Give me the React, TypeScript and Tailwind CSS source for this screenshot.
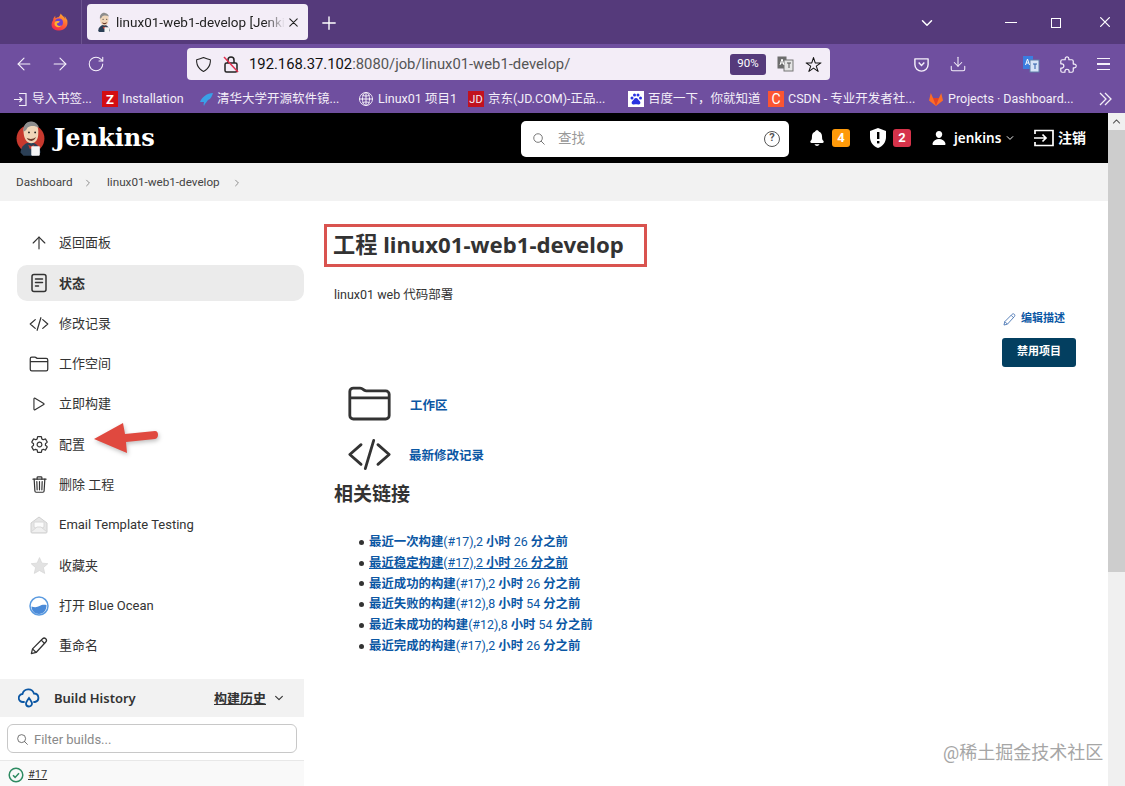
import React from "react";
import {
  IoCodeSlashOutline, IoFolderOutline, IoPlayOutline, IoSettingsOutline, IoTrashOutline,
  IoSearchOutline, IoNotifications, IoPerson, IoChevronDown, IoChevronForward,
  IoCloseOutline, IoAddOutline, IoShieldOutline, IoStarOutline,
  IoExtensionPuzzleOutline, IoGlobeOutline, IoChevronUp,
} from "react-icons/io5";
import { ArrowUp, ArrowLeft, ArrowRight, RotateCw, Download } from "lucide-react";

const Head = ({ s, tab }: { s: number; tab?: boolean }) => (
  <svg width={s} height={s * 1.15} viewBox="0 0 40 46">
    {!tab && <circle cx="20" cy="24" r="18" fill="#c7392e" />}
    <path d="M7 42c1-9 7-13 13-13s12 4 13 13l-5 4H11z" fill="#2b3f55" />
    <path d="M11 14C11 6 16 2 22 3s9 7 8 15c0 6-3 12-9 12-6 0-10-6-10-16z" fill="#f0d6b9" />
    <path d="M11 15C10 7 15 1 22 2c5 1 8 4 9 8-5-3-12-3-15 0-1 2-2 4-5 5z" fill="#8d8d8d" />
    <path d="M15 23c3 2 9 2 12-1-1 3-3 5-6 5s-5-2-6-4z" fill="#6b3a2a" />
    <circle cx="18" cy="16" r="1.2" fill="#222" /><circle cx="26" cy="16" r="1.2" fill="#222" />
    <path d="M17 32l4 2 4-2-2 5h-4z" fill="#c7392e" />
    <rect x="21" y="34" width="11" height="12" rx="1" fill="#f4f4f4" />
  </svg>
);

const Firefox = () => (
  <svg width="17" height="18" viewBox="0 0 32 32">
    <defs>
      <linearGradient id="ff" x1="0.8" y1="0" x2="0.2" y2="1"><stop offset="0" stopColor="#ffb32c" /><stop offset="0.55" stopColor="#ff5a36" /><stop offset="1" stopColor="#f0264f" /></linearGradient>
    </defs>
    <path d="M30 12c-1-3-3-6-5-7 1 2 2 4 2 6-2-5-6-7-9-11 0 3-2 5-4 7-2 0-4 1-5 2-1-1-1-3-1-5-2 2-4 5-4 8-2 3-3 6-3 9 0 7 6 11 15 11s15-7 15-14c0-2 0-5-1-7z" fill="url(#ff)" />
    <circle cx="15" cy="17" r="7.5" fill="#6d3fd0" />
    <path d="M8 15c3-2 8-1 10 1-2 0-4 1-4 2l-3 1c0 4 5 6 9 3-2 4-8 5-11 2-3-2-3-6-1-9z" fill="#ffb32c" />
  </svg>
);

const Bookmark = ({ icon, text, gap }: { icon: React.ReactNode; text: string; gap: string }) => (
  <div className={`flex items-center shrink-0 gap-1 ${gap}`}>
    {icon}
    <span className="text-[12.5px] text-[#f3eef8] whitespace-nowrap leading-none">{text}</span>
  </div>
);

const StatusIcon = () => (
  <svg width="16" height="20" viewBox="0 0 16 20" fill="none" stroke="#333" strokeWidth="1.5" strokeLinecap="round">
    <rect x="1" y="1.5" width="14" height="17" rx="2" />
    <path d="M4.5 6h7M4.5 9.5h7M4.5 13h3" />
  </svg>
);

const Pencil = ({ size, color, w = 1.4 }: { size: number; color: string; w?: number }) => (
  <svg width={size} height={size} viewBox="0 0 20 20" fill="none" stroke={color} strokeWidth={w} strokeLinejoin="round">
    <path d="M1.500 18.500l1.300-5.300L14 2c1-1 2.500-1 3.500 0s1 2.500 0 3.500L6.800 17.200z" />
    <path d="M12.500 3.500l4 4M2.800 13.200l4 4" />
  </svg>
);

const Mail = () => (
  <svg width="18" height="18" viewBox="0 0 18 18">
    <path d="M1 7l8-6 8 6v9a1 1 0 0 1-1 1H2a1 1 0 0 1-1-1z" fill="#e6e6e6" stroke="#d0d0d0" />
    <path d="M4 6h10v5l-5 3-5-3z" fill="#fbfbfb" stroke="#d8d8d8" />
    <path d="M1 16l6-5h4l6 5" fill="#f0f0f0" stroke="#d8d8d8" />
  </svg>
);

const GreyStar = () => (
  <svg width="19" height="19" viewBox="0 0 24 24"><path d="M12 2l3 7 7.5.7-5.6 5 1.7 7.3L12 18.300 5.400 22l1.700-7.300-5.600-5L9 9z" fill="#e2e2e2" stroke="#d8d8d8" /></svg>
);

const BlueOcean = () => (
  <svg width="20" height="20" viewBox="0 0 20 20">
    <circle cx="10" cy="10" r="9" fill="#fff" stroke="#5b9be0" strokeWidth="1.500" />
    <path d="M2.500 10.500c3 1 6 .8 8-.5 2-1.200 4-1.500 7-1 .3 5-3 9-7.500 9s-7.500-3.500-7.500-7.500z" fill="#4a8ad8" />
  </svg>
);

const items: { icon: React.ReactNode; label: string; active?: boolean }[] = [
  { icon: <ArrowUp size={20} strokeWidth={1.4} />, label: "返回面板" },
  { icon: <StatusIcon />, label: "状态", active: true },
  { icon: <IoCodeSlashOutline size={20} />, label: "修改记录" },
  { icon: <IoFolderOutline size={20} />, label: "工作空间" },
  { icon: <IoPlayOutline size={18} />, label: "立即构建" },
  { icon: <IoSettingsOutline size={19} />, label: "配置" },
  { icon: <IoTrashOutline size={19} />, label: "删除 工程" },
  { icon: <Mail />, label: "Email Template Testing" },
  { icon: <GreyStar />, label: "收藏夹" },
  { icon: <BlueOcean />, label: "打开 Blue Ocean" },
  { icon: <Pencil size={18} color="#333" />, label: "重命名" },
];

const links = [
  ["最近一次构建", "(#17),2 ", "小时", " 26 ", "分之前"],
  ["最近稳定构建", "(#17),2 ", "小时", " 26 ", "分之前"],
  ["最近成功的构建", "(#17),2 ", "小时", " 26 ", "分之前"],
  ["最近失败的构建", "(#12),8 ", "小时", " 54 ", "分之前"],
  ["最近未成功的构建", "(#12),8 ", "小时", " 54 ", "分之前"],
  ["最近完成的构建", "(#17),2 ", "小时", " 26 ", "分之前"],
];

export default function App() {
  return (
    <div className="relative w-[1125px] h-[786px] overflow-hidden bg-white flex flex-col text-[#333] font-['Roboto','Noto_Sans_CJK_SC',sans-serif]">
      {/* tab strip */}
      <div className="h-[44px] shrink-0 bg-[#553a7b] flex items-start text-white">
        <div className="w-[82px] h-[44px] border-r border-[#6d5490] flex items-center justify-end pr-[13px]"><Firefox /></div>
        <div className="ml-[5px] mt-[4px] w-[221px] h-[36px] bg-[#f3edf7] rounded-[4px] flex items-center pl-[8px] text-[#222]">
          <Head s={18} tab />
          <span className="ml-[3px] w-[169px] overflow-hidden whitespace-nowrap text-[13.500px] [mask-image:linear-gradient(to_right,black_88%,transparent)]">linux01-web1-develop [Jenkins]</span>
          <IoCloseOutline size={17} />
        </div>
        <IoAddOutline size={22} className="ml-[10px] mt-[12px]" />
        <div className="flex-1" />
        <IoChevronDown size={16} className="mt-[15px] mr-[70px]" />
        <div className="w-[12px] h-px bg-white mt-[22px] mr-[34px]" />
        <div className="w-[10px] h-[10px] border border-white mt-[18px] mr-[34px]" />
        <IoCloseOutline size={20} className="mt-[12px] mr-[10px]" />
      </div>
      {/* toolbar */}
      <div className="h-[36px] shrink-0 bg-[#6f4f9f] flex items-center pt-[4px] text-[#f6f1fb]">
        <ArrowLeft size={20} strokeWidth={1.300} className="ml-[14px]" />
        <ArrowRight size={20} strokeWidth={1.300} className="ml-[16px]" />
        <RotateCw size={18} strokeWidth={1.400} className="ml-[17px]" />
        <div className="ml-[82px] w-[643px] h-[32px] bg-[#f3edf7] rounded-[4px] flex items-center text-[#222] shrink-0">
          <IoShieldOutline size={17} className="ml-[8px]" />
          <svg width="16" height="18" viewBox="0 0 16 18" className="ml-[11px]" fill="none">
            <rect x="2" y="8" width="12" height="9" rx="1.500" stroke="#222" strokeWidth="1.500" />
            <path d="M5 8V5a3 3 0 0 1 6 0v3" stroke="#222" strokeWidth="1.500" />
            <path d="M1 2l14 15" stroke="#e2304f" strokeWidth="1.500" />
          </svg>
          <span className="ml-[10px] text-[14.800px] whitespace-nowrap text-[#555]"><span className="text-[#111]">192.168.37.102</span>:8080/job/linux01-web1-develop/</span>
          <div className="flex-1" />
          <div className="w-[36px] h-[21px] rounded-[3px] bg-[#553a7b] text-white text-[11.500px] flex items-center justify-center">90%</div>
          <svg width="17" height="16" viewBox="0 0 17 16" className="ml-[11px]">
            <rect x="0.500" y="0.500" width="9" height="12" fill="#6d6d6d" /><rect x="7" y="4" width="9" height="11" fill="#e4e4e4" stroke="#777" />
            <path d="M3 9l2-6 2 6M3.800 7h2.400" stroke="#fff" fill="none" /><path d="M10 7h4M12 7v5" stroke="#555" />
          </svg>
          <IoStarOutline size={17} className="ml-[11px] text-[#111]" />
          <div className="w-[8px]" />
        </div>
        <svg width="17" height="17" viewBox="0 0 18 18" fill="none" stroke="#f6f1fb" strokeWidth="1.500" className="ml-[83px]"><path d="M2 3h14v6a7 7 0 0 1-14 0z" strokeLinejoin="round" /><path d="M6 7l3 3 3-3" /></svg>
        <Download size={18} strokeWidth={1.400} className="ml-[19px]" />
        <svg width="18" height="18" viewBox="0 0 18 18" className="ml-[55px]">
          <rect x="1" y="1" width="10" height="13" fill="#3b7de0" /><rect x="8" y="5" width="9" height="12" fill="#d6e4f7" stroke="#5e7ea8" />
          <path d="M3.500 10l2-6 2 6M4.300 8h2.400" stroke="#fff" fill="none" /><path d="M11 9h4M13 9v5" stroke="#2b5ca8" />
        </svg>
        <IoExtensionPuzzleOutline size={19} className="ml-[19px]" />
        <div className="ml-[19px] flex flex-col gap-[4px]"><div className="w-[13px] h-[1.500px] bg-[#f6f1fb]" /><div className="w-[13px] h-[1.500px] bg-[#f6f1fb]" /><div className="w-[13px] h-[1.500px] bg-[#f6f1fb]" /></div>
      </div>
      {/* bookmarks */}
      <div className="h-[33px] shrink-0 bg-[#6f4f9f] flex items-center pl-[13px] pt-[5px]">
        <Bookmark gap="w-[89px]" text="导入书签..." icon={<svg width="15" height="15" viewBox="0 0 15 15" fill="none" stroke="#f3eef8" strokeWidth="1.200"><path d="M6 1.500h7v12H6M1 7.500h8M6.500 5l2.500 2.500L6.500 10" /></svg>} />
        <Bookmark gap="w-[97px]" text="Installation" icon={<span className="w-[16px] h-[16px] bg-[#d40d12] text-white font-bold text-[13px] flex items-center justify-center leading-none">Z</span>} />
        <Bookmark gap="w-[159px]" text="清华大学开源软件镜..." icon={<svg width="14" height="14" viewBox="0 0 14 14"><path d="M1 10C3 5 8 1 14 1c-1 3-2 6-5 7-1 2-3 3-4 6-1-2 0-3 0-4-1 0-3 0-4 0z" fill="#3aa0e8" /></svg>} />
        <Bookmark gap="w-[110px]" text="Linux01 项目1" icon={<IoGlobeOutline size={16} className="text-[#f3eef8]" />} />
        <Bookmark gap="w-[160px]" text="京东(JD.COM)-正品..." icon={<span className="w-[16px] h-[16px] bg-[#c1121f] text-[#f3eef8] text-[11px] flex items-center justify-center leading-none">JD</span>} />
        <Bookmark gap="w-[140px]" text="百度一下，你就知道" icon={<span className="w-[16px] h-[16px] bg-white flex items-center justify-center"><svg width="14" height="14" viewBox="0 0 14 14" fill="#2932e1"><circle cx="3" cy="6" r="1.500" /><circle cx="5.500" cy="3" r="1.500" /><circle cx="9" cy="3" r="1.500" /><circle cx="11.500" cy="6" r="1.500" /><path d="M7 6c2 0 2 2 4 3.500 1 1.500 0 3.500-2 3-1-.3-3-.3-4 0-2 .5-3-1.500-2-3C5 8 5 6 7 6z" /></svg></span>} />
        <Bookmark gap="w-[160px]" text="CSDN - 专业开发者社..." icon={<span className="w-[16px] h-[16px] bg-[#fc5531] text-white text-[14px] flex items-center justify-center leading-none">C</span>} />
        <Bookmark gap="" text="Projects · Dashboard..." icon={<svg width="16" height="16" viewBox="0 0 16 16"><path d="M8 15L1 9.500 2.800 2 5 7h6l2.200-5L15 9.500z" fill="#fc6d26" /><path d="M8 15L5 7h6z" fill="#e24329" /></svg>} />
        <div className="flex-1" />
        <svg width="14" height="14" viewBox="0 0 14 14" fill="none" stroke="#f3eef8" strokeWidth="1.300" className="mr-[13px]"><path d="M2 1l6 6-6 6M7 1l6 6-6 6" /></svg>
      </div>
      {/* page + scrollbar */}
      <div className="flex-1 flex min-h-0">
        <div className="w-[1108px] flex flex-col min-h-0">
          {/* header */}
          <div className="h-[50px] shrink-0 bg-black flex items-center text-white">
            <div className="ml-[15px] w-[39px] flex"><Head s={31} /></div>
            <span className="w-[467px] font-['DejaVu_Serif',serif] font-bold text-[24px] leading-none">Jenkins</span>
            <div className="w-[268px] h-[36px] bg-white rounded-[5px] flex items-center text-[#999] mt-[1px] shrink-0">
              <IoSearchOutline size={14} className="ml-[11px] text-[#666]" />
              <span className="ml-[12px] text-[13.500px]">查找</span>
              <div className="flex-1" />
              <span className="w-[16px] h-[16px] rounded-full border-[1.500px] border-[#555] text-[#555] text-[11px] font-bold flex items-center justify-center mr-[9px]">?</span>
            </div>
            <IoNotifications size={18} className="ml-[19px]" />
            <span className="ml-[6px] w-[18px] h-[18px] rounded-[3px] bg-[#fe9a0a] text-[13px] font-bold flex items-center justify-center">4</span>
            <svg width="18" height="20" viewBox="0 0 18 20" className="ml-[19px]"><path d="M9 0l8 3v6c0 5-3 9-8 11-5-2-8-6-8-11V3z" fill="#fff" /><rect x="8" y="4" width="2.400" height="7" fill="#000" /><rect x="8" y="13" width="2.400" height="2.400" fill="#000" /></svg>
            <span className="ml-[6px] w-[18px] h-[18px] rounded-[3px] bg-[#d6334a] text-[13px] font-bold flex items-center justify-center">2</span>
            <IoPerson size={16} className="ml-[20px]" />
            <span className="ml-[7px] w-[47px] text-[13.500px] font-semibold font-['Noto_Sans',sans-serif]">jenkins</span>
            <IoChevronDown size={10} className="ml-[4px]" />
            <svg width="20" height="18" viewBox="0 0 20 18" fill="none" stroke="#fff" strokeWidth="1.700" className="ml-[19px]"><path d="M1 5V1.500h18v15H1V13M0 9h12M8.500 5.500L12 9l-3.500 3.500" /></svg>
            <span className="ml-[4px] text-[14px] font-semibold">注销</span>
          </div>
          {/* breadcrumb */}
          <div className="h-[38px] shrink-0 bg-[#f2f2f2] flex items-center pt-[2px] text-[11.700px] text-[#444]">
            <span className="ml-[16px] w-[56px]">Dashboard</span>
            <IoChevronForward size={10} className="ml-[11px] text-[#888]" />
            <span className="ml-[14px] w-[114px] whitespace-nowrap">linux01-web1-develop</span>
            <IoChevronForward size={10} className="ml-[11px] text-[#888]" />
          </div>
          <div className="flex-1 flex min-h-0">
            {/* sidebar */}
            <div className="w-[304px] shrink-0 pt-[24px] flex flex-col">
              <div className="pl-[17px] flex flex-col gap-[4.300px]">
                {items.map((it) => (
                  <div key={it.label} className={`h-[36px] rounded-[10px] flex items-center pl-[12px] ${it.active ? "bg-[#ebebeb] font-bold" : ""}`}>
                    <span className="w-[20px] flex justify-center text-[#333]">{it.icon}</span>
                    <span className="ml-[10px] text-[13px] text-[#333]">{it.label}</span>
                  </div>
                ))}
              </div>
              <div className="mt-[15px] h-[38px] shrink-0 bg-[#f2f2f2] flex items-center">
                <svg width="22" height="22" viewBox="0 0 22 22" fill="none" stroke="#0b57a4" strokeWidth="1.800" strokeLinecap="round" className="ml-[18px]">
                  <path d="M6 15H5a4 4 0 0 1-.500-8A6 6 0 0 1 16 6.500 4.300 4.300 0 0 1 17 15h-1" /><path d="M11 11c-2 3-3 4-3 5.500a3 3 0 0 0 6 0C14 15 13 14 11 11z" />
                </svg>
                <span className="ml-[14px] pt-[2px] text-[13px] font-semibold font-['Noto_Sans',sans-serif]">Build History</span>
                <span className="ml-auto pt-[2px] text-[13px] font-semibold underline">构建历史</span>
                <IoChevronDown size={12} className="ml-[7px] mr-[19px]" />
              </div>
              <div className="mt-[7px] ml-[7px] w-[290px] h-[29px] shrink-0 border border-[#c8c8c8] rounded-[6px] flex items-center pt-[2px] text-[#8a8a8a] text-[13px]">
                <IoSearchOutline size={13} className="ml-[8px] text-[#555]" />
                <span className="ml-[5px]">Filter builds...</span>
              </div>
              <div className="mt-[7px] flex-1 border-t border-[#e8e8e8] bg-[#f9f9f9] flex items-center pt-[3px]">
                <svg width="16" height="16" viewBox="0 0 16 16" fill="none" stroke="#2e8b62" strokeWidth="1.500" className="ml-[8px]"><circle cx="8" cy="8" r="6.800" /><path d="M5 8.300l2.100 2.100L11 6.200" /></svg>
                <span className="ml-[4px] text-[11px] underline">#17</span>
              </div>
            </div>
            {/* main */}
            <div className="flex-1 pl-[20px] pr-[32px] pt-[23px]">
              <div className="w-[323px] h-[43px] border-[3px] border-[#d9534f] flex items-center pl-[6px]">
                <h1 className="text-[22.200px] font-bold whitespace-nowrap leading-none font-['Noto_Sans','Noto_Sans_CJK_SC',sans-serif]">工程 linux01-web1-develop</h1>
              </div>
              <p className="mt-[18px] ml-[10px] h-[20px] text-[12.500px] leading-[20px]">linux01 web 代码部署</p>
              <div className="mt-[4px] h-[20px] flex items-center justify-end text-[11px] font-semibold text-[#0b57a4]">
                <span className="mr-[5px]"><Pencil size={13} color="#4a76b4" /></span>
                <span className="mr-[11px]">编辑描述</span>
              </div>
              <div className="mt-[9px] flex justify-end">
                <div className="w-[74px] h-[29px] rounded-[3px] bg-[#033f60] text-white text-[11px] font-semibold flex items-center justify-center">禁用项目</div>
              </div>
              <div className="mt-[20px] ml-[25px] h-[32px] flex items-center">
                <IoFolderOutline size={45} className="-mx-[2px] shrink-0" />
                <span className="ml-[20px] pt-[7px] text-[12.500px] font-semibold text-[#0b57a4]">工作区</span>
              </div>
              <div className="mt-[22px] ml-[25px] h-[26px] flex items-center">
                <IoCodeSlashOutline size={45} className="-mx-[2px] shrink-0" />
                <span className="ml-[19px] pt-[5px] text-[12.500px] font-semibold text-[#0b57a4]">最新修改记录</span>
              </div>
              <h2 className="mt-[13px] ml-[10px] h-[30px] text-[19px] font-bold leading-[30px]">相关链接</h2>
              <ul className="mt-[22px] ml-[10px] pl-[25px]">
                {links.map((l, i) => (
                  <li key={i} className="h-[20.800px] leading-[20.800px] text-[12.400px] text-[#0b57a4] flex items-center">
                    <span className="w-[5px] h-[5px] rounded-full bg-[#333] mr-[5px] shrink-0" />
                    <span className={`whitespace-pre ${i === 1 ? "underline" : ""}`}>
                      <b className="font-semibold">{l[0]}</b>{l[1]}<b className="font-semibold">{l[2]}</b>{l[3]}<b className="font-semibold">{l[4]}</b>
                    </span>
                  </li>
                ))}
              </ul>
            </div>
          </div>
        </div>
        {/* scrollbar */}
        <div className="w-[17px] flex flex-col bg-[#f0f0f0]">
          <div className="h-[17px] flex items-center justify-center text-[#555]"><IoChevronUp size={11} /></div>
          <div className="h-[442px] bg-[#cdcdcd]" />
        </div>
      </div>
      {/* annotation arrow */}
      <svg width="72" height="34" viewBox="0 0 72 34" className="absolute left-[92px] top-[421px] drop-shadow-[1px_2px_2px_rgba(0,0,0,0.25)]">
        <path d="M2 18L31 2l2 11 30-3c4 0 4 7 0 8l-29 3 1 11z" fill="#e0493f" strokeLinejoin="round" />
      </svg>
      {/* watermark */}
      <div className="absolute left-[943px] top-[741px] text-[18px] leading-[24px] text-[#a6a6a6] whitespace-nowrap">@稀土掘金技术社区</div>
    </div>
  );
}
